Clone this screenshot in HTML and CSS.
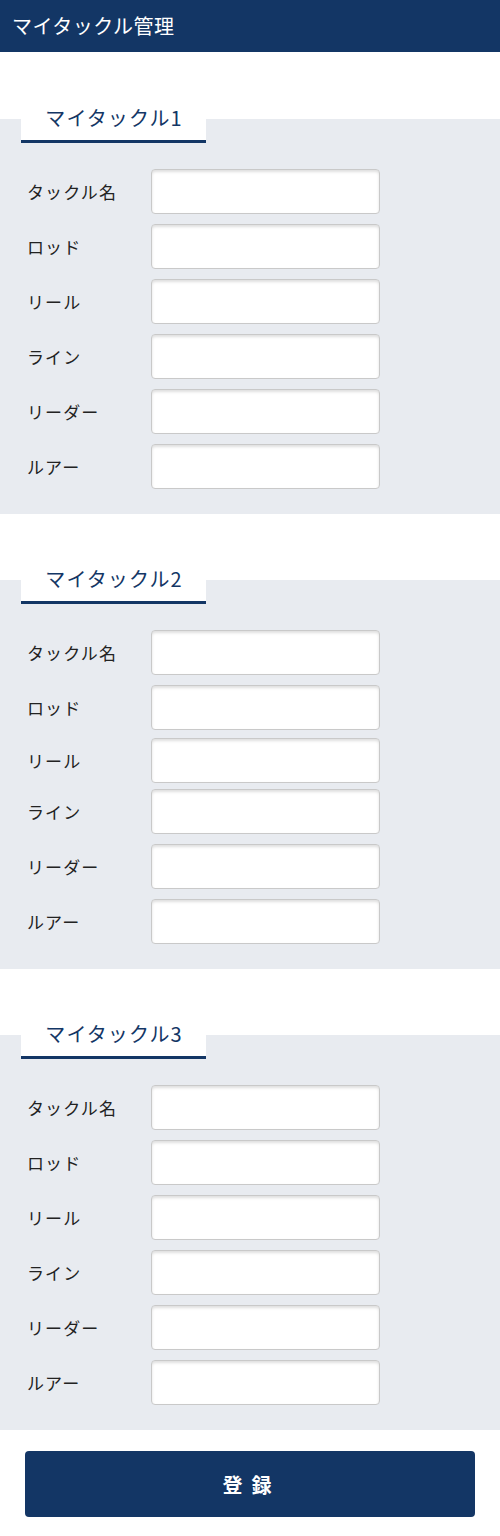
FILE: index.html
```html
<!DOCTYPE html>
<html lang="ja">
<head>
<meta charset="utf-8">
<title>マイタックル管理</title>
<link rel="stylesheet" href="styles.css">
</head>
<body>
<header class="app-header">マイタックル管理</header>
<main class="page">
  <section class="card">
    <h2 class="card-title">マイタックル1</h2>
    <div class="rows">
      <label class="row"><span class="row-label">タックル名</span><input class="field" type="text"></label>
      <label class="row"><span class="row-label">ロッド</span><input class="field" type="text"></label>
      <label class="row"><span class="row-label">リール</span><input class="field" type="text"></label>
      <label class="row"><span class="row-label">ライン</span><input class="field" type="text"></label>
      <label class="row"><span class="row-label">リーダー</span><input class="field" type="text"></label>
      <label class="row"><span class="row-label">ルアー</span><input class="field" type="text"></label>
    </div>
  </section>
  <section class="card">
    <h2 class="card-title">マイタックル2</h2>
    <div class="rows">
      <label class="row"><span class="row-label">タックル名</span><input class="field" type="text"></label>
      <label class="row"><span class="row-label">ロッド</span><input class="field" type="text"></label>
      <label class="row row--tight2"><span class="row-label">リール</span><input class="field" type="text"></label>
      <label class="row row--tight4"><span class="row-label">ライン</span><input class="field" type="text"></label>
      <label class="row"><span class="row-label">リーダー</span><input class="field" type="text"></label>
      <label class="row"><span class="row-label">ルアー</span><input class="field" type="text"></label>
    </div>
  </section>
  <section class="card">
    <h2 class="card-title">マイタックル3</h2>
    <div class="rows">
      <label class="row"><span class="row-label">タックル名</span><input class="field" type="text"></label>
      <label class="row"><span class="row-label">ロッド</span><input class="field" type="text"></label>
      <label class="row"><span class="row-label">リール</span><input class="field" type="text"></label>
      <label class="row"><span class="row-label">ライン</span><input class="field" type="text"></label>
      <label class="row"><span class="row-label">リーダー</span><input class="field" type="text"></label>
      <label class="row"><span class="row-label">ルアー</span><input class="field" type="text"></label>
    </div>
  </section>
  <div class="actions">
    <button class="submit" type="button">登録</button>
  </div>
</main>
</body>
</html>
```
FILE: styles.css
```css
* { box-sizing: border-box; }

html, body {
  margin: 0;
  padding: 0;
  background: #ffffff;
}

body {
  font-family: "Noto Sans CJK JP", "Noto Sans", sans-serif;
  color: #222222;
}

.app-header {
  height: 52px;
  line-height: 52px;
  padding-left: 12px;
  background: #133665;
  color: #ffffff;
  font-size: 20px;
  letter-spacing: 0.5px;
}

.page {
  display: flex;
  flex-direction: column;
}

.card {
  display: flex;
  flex-direction: column;
  background: #e8ebf0;
  margin-top: 66px;
  padding-bottom: 25px;
}

.card:first-child {
  margin-top: 67px;
}

.card-title {
  margin: -24px 0 0 21px;
  width: 185px;
  height: 48px;
  line-height: 45px;
  padding-left: 1px;
  background: #ffffff;
  border-bottom: 3px solid #133665;
  color: #133665;
  font-size: 20px;
  font-weight: normal;
  letter-spacing: 1.1px;
  text-align: center;
}

.rows {
  display: flex;
  flex-direction: column;
  gap: 10px;
  margin-top: 26px;
}

.row {
  display: flex;
  align-items: center;
  padding-left: 27px;
}

.row--tight2 { margin-top: -2px; }
.row--tight4 { margin-top: -4px; }

.row-label {
  width: 124px;
  font-size: 17px;
  letter-spacing: 1.1px;
  color: #222222;
}

.field {
  width: 229px;
  height: 45px;
  margin: 0;
  padding: 0 8px;
  border: 1px solid #c9c9c9;
  border-radius: 4px;
  background: #ffffff;
  box-shadow: inset 0 2px 3px rgba(0, 0, 0, 0.13);
  font-family: inherit;
  font-size: 16px;
  outline: none;
}

.actions {
  display: flex;
  padding: 21px 25px 0;
}

.submit {
  flex: 1;
  height: 66px;
  border: none;
  border-radius: 4px;
  background: #133665;
  color: #ffffff;
  font-family: inherit;
  font-size: 20px;
  font-weight: bold;
  letter-spacing: 9px;
  padding-left: 9px;
  cursor: pointer;
}
```
